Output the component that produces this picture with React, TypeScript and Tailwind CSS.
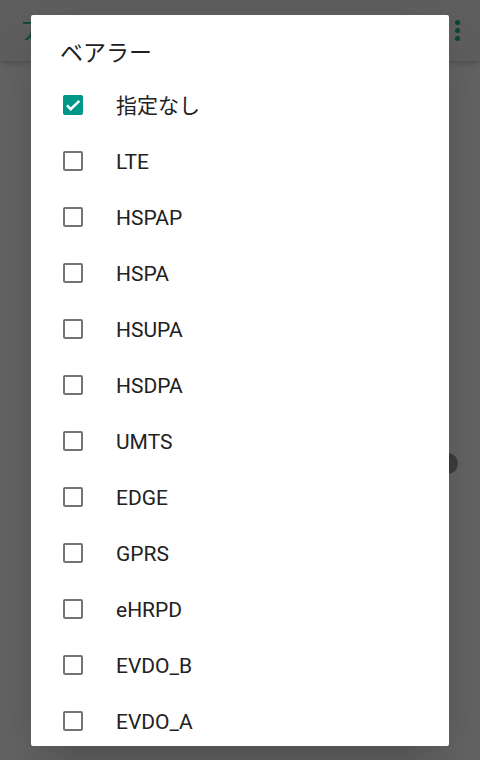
import React from "react";

const bearers = [
  "指定なし",
  "LTE",
  "HSPAP",
  "HSPA",
  "HSUPA",
  "HSDPA",
  "UMTS",
  "EDGE",
  "GPRS",
  "eHRPD",
  "EVDO_B",
  "EVDO_A",
];

function CheckBox({ checked }: { checked: boolean }) {
  if (checked) {
    return (
      <div className="w-[20px] h-[20px] rounded-[2px] bg-[#009688] flex items-center justify-center">
        <svg width="18" height="18" viewBox="0 0 24 24">
          <path d="M4 12.5l5 5L20.5 6.5" fill="none" stroke="#fff" strokeWidth="3.4" />
        </svg>
      </div>
    );
  }
  return <div className="w-[20px] h-[20px] rounded-[2px] border-2 border-[#747474]" />;
}

export default function App() {
  return (
    <div
      className="relative w-[480px] h-[760px] overflow-hidden bg-[#636363]"
      style={{ fontFamily: 'Roboto, "Noto Sans CJK JP", sans-serif' }}
    >
      {/* dimmed app behind */}
      <div className="h-[62px] bg-[#5e5e5e] border-b border-[#555] shadow-md flex items-center justify-between pl-[20px] pr-[20px]">
        <span className="text-[24px] text-[#08463d]">ア</span>
        <div className="flex flex-col gap-[3px]">
          <span className="w-[5px] h-[5px] rounded-full bg-[#08463d]" />
          <span className="w-[5px] h-[5px] rounded-full bg-[#08463d]" />
          <span className="w-[5px] h-[5px] rounded-full bg-[#08463d]" />
        </div>
      </div>
      <div className="absolute left-[437px] top-[453px] w-[21px] h-[21px] rounded-full bg-[#3c3c3c]" />

      {/* dialog */}
      <div className="absolute left-[31px] top-[15px] w-[418px] h-[731px] bg-white rounded-[2px] shadow-2xl overflow-hidden">
        <div className="h-[62px] pl-[29px] pt-[14px] flex items-center">
          <span className="text-[23px] leading-none text-[#212121]">ベアラー</span>
        </div>
        {bearers.map((b, i) => (
          <div key={b} className="h-[56px] flex items-center pl-[32px]">
            <CheckBox checked={i === 0} />
            <span className="ml-[33px] pt-[2px] text-[21px] leading-none text-[#212121]">{b}</span>
          </div>
        ))}
      </div>
    </div>
  );
}
